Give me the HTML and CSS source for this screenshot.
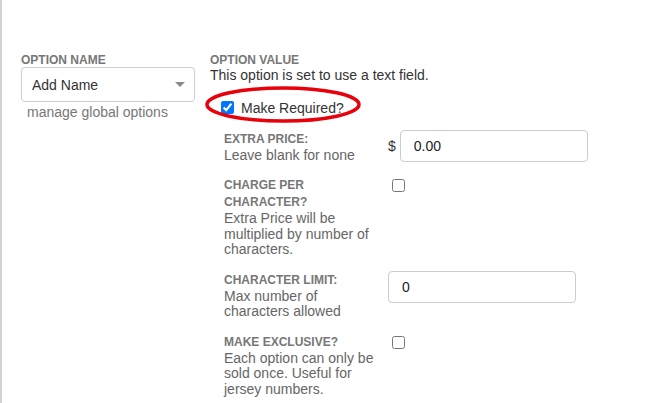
FILE: index.html
```html
<!DOCTYPE html>
<html>
<head>
<meta charset="utf-8">
<link rel="stylesheet" href="styles.css">
</head>
<body>
<div class="page">
  <div class="form-row">
    <div class="col-name">
      <div class="label">Option Name</div>
      <div class="select"><span class="select-text">Add Name</span><span class="caret"></span></div>
      <div class="help">manage global options</div>
    </div>
    <div class="col-value">
      <div class="label">Option Value</div>
      <div class="desc">This option is set to use a text field.</div>
      <div class="required">
        <input type="checkbox" class="check" checked>
        <span class="required-text">Make Required?</span>
        <svg class="mark" width="170" height="45" viewBox="0 0 170 45">
          <ellipse cx="83" cy="21.5" rx="76" ry="16.5" fill="none" stroke="#e8000b" stroke-width="3.5"/>
        </svg>
      </div>
      <div class="settings">
        <div class="setting">
          <div class="setting-text"><span class="setting-label">Extra Price:</span><br>Leave blank for none</div>
          <div class="setting-ctrl"><span class="currency">$</span><input class="field" type="text" value="0.00"></div>
        </div>
        <div class="setting">
          <div class="setting-text"><span class="setting-label">Charge per Character?</span><br>Extra Price will be multiplied by number of characters.</div>
          <div class="setting-ctrl"><input type="checkbox" class="check"></div>
        </div>
        <div class="setting">
          <div class="setting-text"><span class="setting-label">Character Limit:</span><br>Max number of characters allowed</div>
          <div class="setting-ctrl"><input class="field" type="text" value="0"></div>
        </div>
        <div class="setting">
          <div class="setting-text"><span class="setting-label">Make Exclusive?</span><br>Each option can only be sold once. Useful for jersey numbers.</div>
          <div class="setting-ctrl"><input type="checkbox" class="check"></div>
        </div>
      </div>
    </div>
  </div>
</div>
</body>
</html>
```
FILE: styles.css
```css
html, body {
  margin: 0;
  padding: 0;
  background: #fff;
  font-family: "Liberation Sans", Arial, sans-serif;
}
.page {
  height: 403px;
  box-sizing: border-box;
  border-left: 2px solid #d2d2d2;
  padding: 53px 0 0 19px;
  overflow: hidden;
}
.form-row {
  display: flex;
  align-items: flex-start;
}
.col-name {
  width: 174px;
}
.label {
  font-size: 12px;
  font-weight: bold;
  line-height: 14px;
  text-transform: uppercase;
  color: #777;
}
.select {
  box-sizing: border-box;
  height: 35px;
  border: 1px solid #ccc;
  border-radius: 4px;
  display: flex;
  align-items: center;
  justify-content: space-between;
  padding: 0 9px 0 10px;
}
.select-text {
  font-size: 14px;
  line-height: 16px;
  color: #333;
}
.caret {
  width: 0;
  height: 0;
  border-left: 5px solid transparent;
  border-right: 5px solid transparent;
  border-top: 5px solid #8a8a8a;
}
.help {
  margin-top: 2px;
  padding-left: 6px;
  font-size: 14px;
  line-height: 16px;
  color: #777;
}
.col-value {
  margin-left: 15px;
  flex: 1;
}
.desc {
  font-size: 14px;
  line-height: 16px;
  color: #333;
}
.required {
  position: relative;
  margin-top: 15px;
  padding-left: 7px;
  display: flex;
  align-items: center;
}
.check {
  width: 13px;
  height: 13px;
  margin: 3px 3px 3px 4px;
}
.required-text {
  margin-left: 4px;
  font-size: 14px;
  line-height: 16px;
  color: #333;
}
.mark {
  position: absolute;
  left: -10px;
  top: -15px;
  pointer-events: none;
}
.settings {
  margin-top: 13px;
  padding-left: 14px;
}
.setting {
  display: flex;
  align-items: flex-start;
  margin-bottom: 13px;
}
.setting-text {
  width: 155px;
  margin-right: 9px;
  padding-top: 1px;
  font-size: 14px;
  line-height: 15.7px;
  color: #666;
}
.setting-label {
  font-size: 12px;
  font-weight: bold;
  text-transform: uppercase;
  color: #777;
}
.setting-ctrl {
  display: flex;
  align-items: center;
}
.currency {
  font-size: 14px;
  color: #333;
  margin-right: 4px;
}
.field {
  box-sizing: border-box;
  width: 188px;
  height: 32px;
  margin: 0;
  border: 1px solid #ccc;
  border-radius: 4px;
  padding: 0 13px;
  font-family: "Liberation Sans", Arial, sans-serif;
  font-size: 14px;
  color: #222;
  background: #fff;
  outline: none;
}
```
